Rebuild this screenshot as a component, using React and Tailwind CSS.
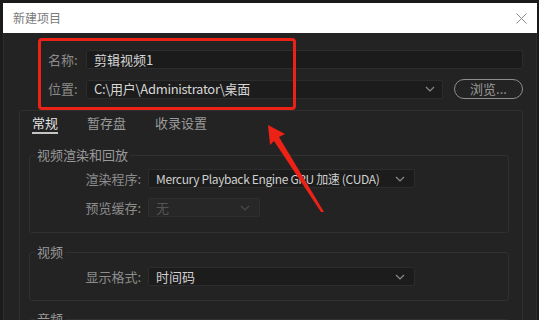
import React from "react";

const Chevron = ({ color = "#8a8a8a" }) => (
  <svg width="10" height="6" viewBox="0 0 10 6" fill="none">
    <path d="M1 1l4 4 4-4" stroke={color} strokeWidth="1.2" />
  </svg>
);

function Select({ value, width, muted = false, small = false }) {
  return (
    <div
      className={`${width} h-[19px] flex items-center justify-between pl-[7px] pr-[9px] rounded-[2px] border ${
        muted ? "bg-[#272727] border-[#2e2e2e] text-[#555]" : "bg-[#1c1c1c] border-[#2c2c2c] text-[#cfcfcf]"
      }`}
    >
      <span className={small ? "text-[12px] tracking-[-0.35px] whitespace-nowrap" : "whitespace-nowrap"}>{value}</span>
      <Chevron color={muted ? "#4a4a4a" : "#8a8a8a"} />
    </div>
  );
}

function Group({ title, children, className = "" }) {
  return (
    <fieldset className={`border border-[#303030] rounded-[3px] ${className}`}>
      <legend className="ml-[5px] px-[2px] text-[13px] leading-[18px] text-[#999]">{title}</legend>
      {children}
    </fieldset>
  );
}

function Row({ label, children, className = "" }) {
  return (
    <div className={`flex items-center ${className}`}>
      <span className="w-[112px] text-right pr-[1px] text-[#8c8c8c]">{label}</span>
      <div className="ml-[6px]">{children}</div>
    </div>
  );
}

export default function App() {
  return (
    <div className="relative w-[539px] h-[320px] overflow-hidden bg-[#1b1b1b] pt-[3px] pl-[3px] pr-[2px] text-[13px] leading-[18px] font-['Noto_Sans_CJK_SC','Noto_Sans',sans-serif]">
      <div className="h-[30px] bg-white flex items-center justify-between pl-[10px] pr-[10px]">
        <span className="text-[12px] text-[#7a7a7a]">新建项目</span>
        <svg width="11" height="11" viewBox="0 0 11 11">
          <path d="M0.5 0.5l10 10M10.5 0.5l-10 10" stroke="#8a8a8a" strokeWidth="1" />
        </svg>
      </div>

      <div className="h-[287px] bg-[#232323] border-l border-r border-[#2d2d2d] pl-[15px] pr-[13px] pt-[17px]">
        <div className="pl-[29px]">
          <div className="flex items-center h-[19px]">
            <span className="w-[38px] text-[#8c8c8c]">名称:</span>
            <div className="flex-1 h-[19px] flex items-center pl-[7px] bg-[#1b1b1b] border border-[#2c2c2c] rounded-[2px] text-[#d6d6d6]">
              剪辑视频1
            </div>
          </div>
          <div className="flex items-center h-[20px] mt-[10px]">
            <span className="w-[38px] text-[#8c8c8c]">位置:</span>
            <div className="w-[357px] h-[19px] flex items-center justify-between pl-[7px] pr-[7px] bg-[#1c1c1c] border border-[#2c2c2c] rounded-[2px] text-[#d6d6d6]">
              <span className="tracking-[-0.3px]">C:\用户\Administrator\桌面</span>
              <Chevron />
            </div>
            <button className="ml-[11px] w-[69px] h-[20px] rounded-full border-[1.5px] border-[#8e8e8e] text-[#9a9a9a] text-[13px] leading-[16px]">
              浏览...
            </button>
          </div>
        </div>

        <div className="mt-[11px] h-[300px] border border-[#2f2f2f] rounded-[3px] pl-[9px] pr-[13px]">
          <div className="flex gap-[29px] pl-[3px] pt-[3px]">
            <span className="border-b-2 border-[#c4c4c4] text-[#e2e2e2]">常规</span>
            <span className="border-b-2 border-transparent text-[#9a9a9a]">暂存盘</span>
            <span className="border-b-2 border-transparent text-[#9a9a9a]">收录设置</span>
          </div>

          <Group title="视频渲染和回放" className="mt-[12px] pb-[15px]">
            <Row label="渲染程序:" className="mt-[5px]">
              <Select width="w-[267px]" value="Mercury Playback Engine GPU 加速 (CUDA)" small />
            </Row>
            <Row label="预览缓存:" className="mt-[10px]">
              <Select width="w-[112px]" value="无" muted />
            </Row>
          </Group>

          <Group title="视频" className="mt-[10px] pb-[14px]">
            <Row label="显示格式:" className="mt-[6px]">
              <Select width="w-[267px]" value="时间码" />
            </Row>
          </Group>

          <Group title="音频" className="mt-[9px] h-[40px]" />
        </div>
      </div>

      {/* annotation: red box + arrow */}
      <div className="absolute left-[38px] top-[38px] w-[258px] h-[72px] border-[3px] border-[#ec2216] rounded-[4px]" />
      <svg className="absolute left-0 top-0" width="539" height="320" viewBox="0 0 539 320">
        <polygon
          points="268,125 285,134 279,137 324,212 321,212 274,141 270,145"
          fill="#ec2216"
        />
      </svg>
    </div>
  );
}
